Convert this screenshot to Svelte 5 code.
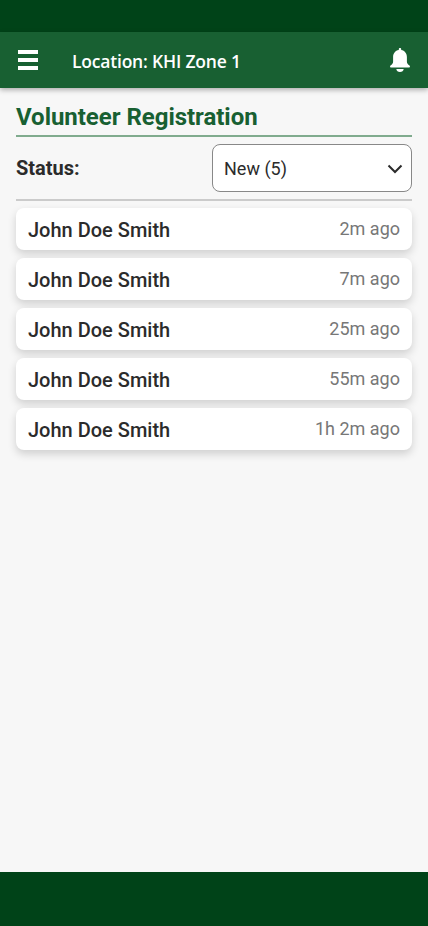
<script>
  const volunteers = [
    { name: 'John Doe Smith', time: '2m ago' },
    { name: 'John Doe Smith', time: '7m ago' },
    { name: 'John Doe Smith', time: '25m ago' },
    { name: 'John Doe Smith', time: '55m ago' },
    { name: 'John Doe Smith', time: '1h 2m ago' }
  ];
</script>

<div class="screen">
  <div class="status-bar"></div>
  <header>
    <button class="menu" aria-label="Menu">
      <svg width="20" height="20" viewBox="0 0 20 20" fill="#fff" shape-rendering="crispEdges">
        <path d="M0 0h20v4H0zM0 8h20v4H0zM0 16h20v4H0z" />
      </svg>
    </button>
    <span class="location">Location: KHI Zone 1</span>
    <button class="bell" aria-label="Notifications">
      <svg width="20" height="24" viewBox="0 0 20 24" fill="#fff">
        <path d="M10 0c.7 0 1.200.5 1.200 1.200v.9c3.600.6 5.700 3.500 5.700 7v4.300c0 1.700.8 2.700 2 3.700.7.6 1.100 1 1.100 1.600 0 .5-.4.8-.9.8H.9c-.5 0-.9-.3-.9-.8 0-.6.4-1 1.100-1.600 1.200-1 2-2 2-3.700V9.100c0-3.500 2.100-6.400 5.700-7v-.9C8.800.5 9.300 0 10 0z" />
        <path d="M6.300 20.900h7.400c-.2 1.800-1.700 3.100-3.700 3.100s-3.500-1.300-3.700-3.100z" />
      </svg>
    </button>
  </header>
  <main>
    <h1>Volunteer Registration</h1>
    <div class="filter">
      <span class="label">Status:</span>
      <button class="select">
        <span>New (5)</span>
        <svg width="16" height="10" viewBox="0 0 16 10" fill="none" stroke="#2b2b2b" stroke-width="2">
          <path d="M1.500 1.500 8 8l6.500-6.500" />
        </svg>
      </button>
    </div>
    <ul>
      {#each volunteers as v}
        <li><span class="name">{v.name}</span><span class="time">{v.time}</span></li>
      {/each}
    </ul>
  </main>
  <div class="nav-bar"></div>
</div>

<style>
  .screen {
    display: flex;
    flex-direction: column;
    height: 926px;
    background: #f7f7f7;
    font-family: Roboto, 'Liberation Sans', sans-serif;
    color: #2b2b2b;
    overflow: hidden;
  }
  .status-bar {
    flex: 0 0 32px;
    background: #004318;
  }
  .nav-bar {
    flex: 0 0 54px;
    background: #004318;
  }
  header {
    flex: 0 0 56px;
    box-sizing: border-box;
    display: flex;
    align-items: center;
    padding: 0 18px;
    background: #186032;
    box-shadow: 0 2px 5px rgba(0, 0, 0, 0.3);
  }
  button {
    border: 0;
    padding: 0;
    background: none;
    font: inherit;
    color: inherit;
  }
  svg {
    display: block;
  }
  .location {
    margin-left: 34px;
    padding-top: 1px;
    flex: 1;
    font: 600 17.5px/24px 'Open Sans', 'Noto Sans', sans-serif;
    letter-spacing: -0.2px;
    color: #fff;
    white-space: nowrap;
  }
  main {
    flex: 1;
    padding: 12px 16px 0;
  }
  h1 {
    margin: 0;
    height: 35px;
    border-bottom: 2px solid #80ab8e;
    font-size: 24px;
    line-height: 34px;
    font-weight: 700;
    letter-spacing: -0.03px;
    color: #186032;
  }
  .filter {
    display: flex;
    justify-content: space-between;
    height: 48px;
    padding: 7px 0;
    border-bottom: 2px solid #cbcbcb;
  }
  .label {
    font-size: 20px;
    line-height: 48px;
    font-weight: 700;
  }
  .select {
    box-sizing: border-box;
    width: 200px;
    height: 48px;
    display: flex;
    align-items: center;
    justify-content: space-between;
    padding: 1px 8px 0 11px;
    border: 1px solid #888;
    border-radius: 8px;
    background: #fff;
    font-size: 18px;
  }
  ul {
    list-style: none;
    margin: 7px 0 0;
    padding: 0;
    display: flex;
    flex-direction: column;
    gap: 8px;
  }
  li {
    display: flex;
    justify-content: space-between;
    height: 42px;
    padding: 0 12px;
    border-radius: 8px;
    background: #fff;
    box-shadow: 0 4px 8px rgba(0, 0, 0, 0.16);
  }
  .name {
    font-size: 20px;
    line-height: 44px;
    font-weight: 500;
  }
  .time {
    font-size: 18px;
    line-height: 42px;
    color: #777;
  }
</style>
